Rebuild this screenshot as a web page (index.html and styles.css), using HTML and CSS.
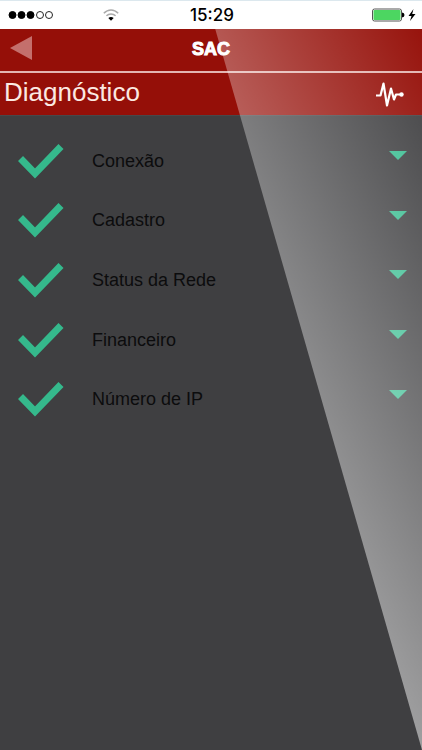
FILE: index.html
```html
<!DOCTYPE html>
<html lang="pt-BR">
<head>
<meta charset="utf-8">
<meta name="viewport" content="width=device-width, initial-scale=1">
<title>SAC</title>
<link rel="stylesheet" href="styles.css">
</head>
<body>
<svg class="defs" aria-hidden="true">
  <symbol id="check" viewBox="0 0 46 36"><path d="M2.500 15.500 17 30.500 43 3.500" fill="none" stroke="#35b98c" stroke-width="7"/></symbol>
  <symbol id="caret" viewBox="0 0 18 9"><path d="M0 0H18L9 9Z" fill="#3abd91"/></symbol>
</svg>
<div class="status">
  <svg class="signal" viewBox="0 0 46 10" aria-hidden="true">
    <g stroke="#000"><circle cx="4.500" cy="5" r="3.500"/><circle cx="13.500" cy="5" r="3.500"/><circle cx="22.500" cy="5" r="3.500"/></g>
    <g fill="none" stroke="#222"><circle cx="32" cy="5" r="3.500"/><circle cx="41" cy="5" r="3.500"/></g>
  </svg>
  <svg class="wifi" viewBox="0 0 16 12" aria-hidden="true">
    <path d="M.8 4.200C5-.2 11-.2 15.200 4.200M3.400 6.700C6 4.300 10 4.300 12.600 6.700" fill="none" stroke="#aaa" stroke-width="1.500"/>
    <path d="M5.300 9C7 7.500 9 7.500 10.700 9L8 11.800Z"/>
  </svg>
  <span class="clock">15:29</span>
  <svg class="battery" viewBox="0 0 44 14" aria-hidden="true">
    <rect x=".5" y="1" width="29" height="12" rx="2" fill="#fff" stroke="#555"/>
    <rect x="1.500" y="2" width="27" height="10" rx="1" fill="#4cd661"/>
    <path d="M30 4.500q2.500 .3 2.500 2.500t-2.500 2.500Z"/>
    <path d="M41.500 1 36.500 8H39.500L38 13 43.500 6H40.200Z"/>
  </svg>
</div>
<div class="app">
  <header>
    <div class="nav">
      <button class="back" aria-label="Voltar"><svg viewBox="0 0 22 24"><path d="M0 12 22 0V24Z" fill="#c46f6c"/></svg></button>
      <h1>SAC</h1>
    </div>
    <div class="section">
      <h2>Diagnóstico</h2>
      <svg class="pulse" viewBox="0 0 29 28" aria-hidden="true">
        <path d="M1 15.500H5.500L8.500 3.500 12 25.500 16 8.500 19 19.500 21 14.500H26" fill="none" stroke="#fff" stroke-width="2.200" stroke-linejoin="round"/>
        <circle cx="26.500" cy="14.500" r="2.200" fill="#fff"/>
      </svg>
    </div>
  </header>
  <main>
    <ul class="checks">
      <li><button class="row"><svg class="check"><use href="#check"/></svg><span>Conexão</span><svg class="caret"><use href="#caret"/></svg></button></li>
      <li><button class="row"><svg class="check"><use href="#check"/></svg><span>Cadastro</span><svg class="caret"><use href="#caret"/></svg></button></li>
      <li><button class="row"><svg class="check"><use href="#check"/></svg><span>Status da Rede</span><svg class="caret"><use href="#caret"/></svg></button></li>
      <li><button class="row"><svg class="check"><use href="#check"/></svg><span>Financeiro</span><svg class="caret"><use href="#caret"/></svg></button></li>
      <li><button class="row"><svg class="check"><use href="#check"/></svg><span>Número de IP</span><svg class="caret"><use href="#caret"/></svg></button></li>
    </ul>
  </main>
  <div class="glare"></div>
</div>
</body>
</html>
```
FILE: styles.css
```css
* {
  box-sizing: border-box;
}

body {
  display: flex;
  flex-direction: column;
  min-height: 100vh;
  margin: 0;
  background: #3f3f41;
  font-family: "Liberation Sans", Arial, sans-serif;
}

button {
  padding: 0;
  border: 0;
  background: none;
  color: inherit;
  font: inherit;
}

svg {
  display: block;
}

.defs {
  position: absolute;
  width: 0;
  height: 0;
}

.status {
  display: grid;
  grid-template-columns: 1fr auto 1fr;
  align-items: center;
  height: 29px;
  padding: 0 6px 0 8px;
  border-top: 1px solid #dce8ee;
  background: #fff;
}

.signal {
  grid-area: 1 / 1;
  width: 46px;
  height: 10px;
}

.wifi {
  grid-area: 1 / 1;
  width: 16px;
  height: 12px;
  margin-left: 95px;
}

.clock {
  grid-area: 1 / 2;
  font: 500 17px/20px Inter, sans-serif;
}

.battery {
  grid-area: 1 / 3;
  justify-self: end;
  width: 44px;
  height: 14px;
}

.app {
  position: relative;
  flex: 1;
}

header {
  background: #950f08;
  color: #fff;
}

.nav {
  display: grid;
  grid-template-columns: 1fr auto 1fr;
  align-items: center;
  height: 44px;
  padding: 0 10px;
  border-bottom: 2px solid #e3b5b1;
}

.back svg {
  width: 22px;
  height: 24px;
}

.nav .back {
  justify-self: start;
  padding-bottom: 4px;
}

h1 {
  margin: 0;
  padding-bottom: 3px;
  font-size: 18px;
  line-height: 20px;
  -webkit-text-stroke: 1px #fff;
}

.section {
  display: flex;
  align-items: center;
  justify-content: space-between;
  height: 42px;
  padding: 0 18px 0 4px;
}

h2 {
  margin: 0;
  padding-bottom: 4px;
  color: #fbe9e2;
  font-size: 26px;
  font-weight: 400;
  line-height: 30px;
}

.pulse {
  width: 29px;
  height: 28px;
}

main {
  border-top: 1px solid #48484a;
}

.checks {
  display: grid;
  grid-template-rows: repeat(5, 1fr);
  height: 298px;
  margin: 15px 0 0;
  padding: 0;
  list-style: none;
}

.checks li {
  display: grid;
}

.row {
  display: flex;
  align-items: center;
  padding: 0 15px 0 18px;
  color: #0c0c0d;
  font-size: 18px;
  line-height: 22px;
  text-align: left;
}

.row span {
  flex: 1;
  margin-left: 28px;
}

.check {
  width: 46px;
  height: 36px;
}

.caret {
  width: 18px;
  height: 9px;
  margin-bottom: 10px;
}

/* Diagonal light reflection over the whole app area */
.glare {
  position: absolute;
  inset: 0 0 0 51%;
  clip-path: polygon(0 0, 100% 0, 100% 100%);
  background: linear-gradient(244deg, rgb(255 255 255 / 0.02), rgb(255 255 255 / 0.78));
  pointer-events: none;
}
```
